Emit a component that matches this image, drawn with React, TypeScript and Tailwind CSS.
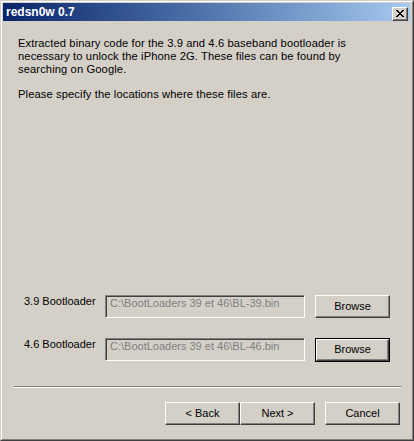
import React from "react";

const font = { fontFamily: '"Liberation Sans", Arial, sans-serif' };

function Btn({ label, def = false, w = "w-[75px]" }: { label: string; def?: boolean; w?: string }) {
  const inner = (
    <div
      className={`flex h-full w-full items-center justify-center border border-t-white border-l-white border-r-[#404040] border-b-[#404040] bg-[#D4D0C8] pb-[1px] text-[11px] leading-[13px] text-black shadow-[inset_-1px_-1px_0_#808080]`}
    >
      {label}
    </div>
  );
  if (def) {
    return <div className={`${w} h-[24px] border border-black`}>{inner}</div>;
  }
  return <div className={`${w} h-[23px]`}>{inner}</div>;
}

function Field({ value }: { value: string }) {
  return (
    <div className="h-[23px] w-[200px] border border-t-[#808080] border-l-[#808080] border-r-white border-b-white bg-[#D4D0C8] pl-[4px] pt-[1px] text-[11px] leading-[13px] text-[#808080] shadow-[inset_1px_1px_0_#404040,inset_-1px_-1px_0_#D4D0C8]">
      {value}
    </div>
  );
}

export default function App() {
  return (
    <div style={font} className="h-[441px] w-[414px] overflow-hidden">
      <div className="h-[441px] w-[414px] border border-t-[#D4D0C8] border-l-[#D4D0C8] border-r-[#404040] border-b-[#404040] bg-[#D4D0C8]">
        <div className="flex h-full w-full flex-col border border-t-white border-l-white border-r-[#808080] border-b-[#808080] pl-[1px] pr-[2px] pt-[1px]">
          {/* Title bar */}
          <div className="flex h-[18px] items-center justify-between bg-gradient-to-r from-[#0A246A] to-[#A6CAF0] pl-[3px] pr-[2px]">
            <span className="text-[12px] font-bold leading-[14px] text-white">redsn0w 0.7</span>
            <div className="mt-[3px] flex h-[14px] w-[16px] items-center justify-center border border-t-white border-l-white border-r-[#404040] border-b-[#404040] bg-[#D4D0C8] shadow-[inset_-1px_-1px_0_#808080]">
              <svg width="8" height="7" viewBox="0 0 8 7" shapeRendering="crispEdges">
                <path
                  d="M0 0h2v1H0zM6 0h2v1H6zM1 1h2v1H1zM5 1h2v1H5zM2 2h4v1H2zM3 3h2v1H3zM2 4h4v1H2zM1 5h2v1H1zM5 5h2v1H5zM0 6h2v1H0zM6 6h2v1H6z"
                  fill="#000"
                />
              </svg>
            </div>
          </div>

          {/* Body */}
          <div className="flex flex-1 flex-col pl-[15px] pt-[16px] text-[11px] leading-[13px] text-black">
            <p className="text-[11.2px] tracking-[0.1px]">
              Extracted binary code for the 3.9 and 4.6 baseband bootloader is
              <br />
              necessary to unlock the iPhone 2G. These files can be found by
              <br />
              searching on Google.
            </p>
            <p className="mt-[12px] text-[11.2px] tracking-[0.1px]">Please specify the locations where these files are.</p>

            <div className="mt-[194px] flex items-start">
              <div className="ml-[6px] w-[81px]">3.9 Bootloader</div>
              <Field value="C:\BootLoaders 39 et 46\BL-39.bin" />
              <div className="ml-[10px]">
                <Btn label="Browse" />
              </div>
            </div>
            <div className="mt-[20px] flex items-start">
              <div className="ml-[6px] w-[81px]">4.6 Bootloader</div>
              <Field value="C:\BootLoaders 39 et 46\BL-46.bin" />
              <div className="ml-[10px]">
                <Btn label="Browse" def />
              </div>
            </div>

            <div className="ml-[-4px] mt-[24px] w-[387px] border-t border-b border-t-[#808080] border-b-white" />

            <div className="mt-[14px] flex">
              <div className="ml-[147px] flex">
                <Btn label="< Back" />
                <Btn label="Next >" />
              </div>
              <div className="ml-[10px]">
                <Btn label="Cancel" />
              </div>
            </div>
          </div>
        </div>
      </div>
    </div>
  );
}
